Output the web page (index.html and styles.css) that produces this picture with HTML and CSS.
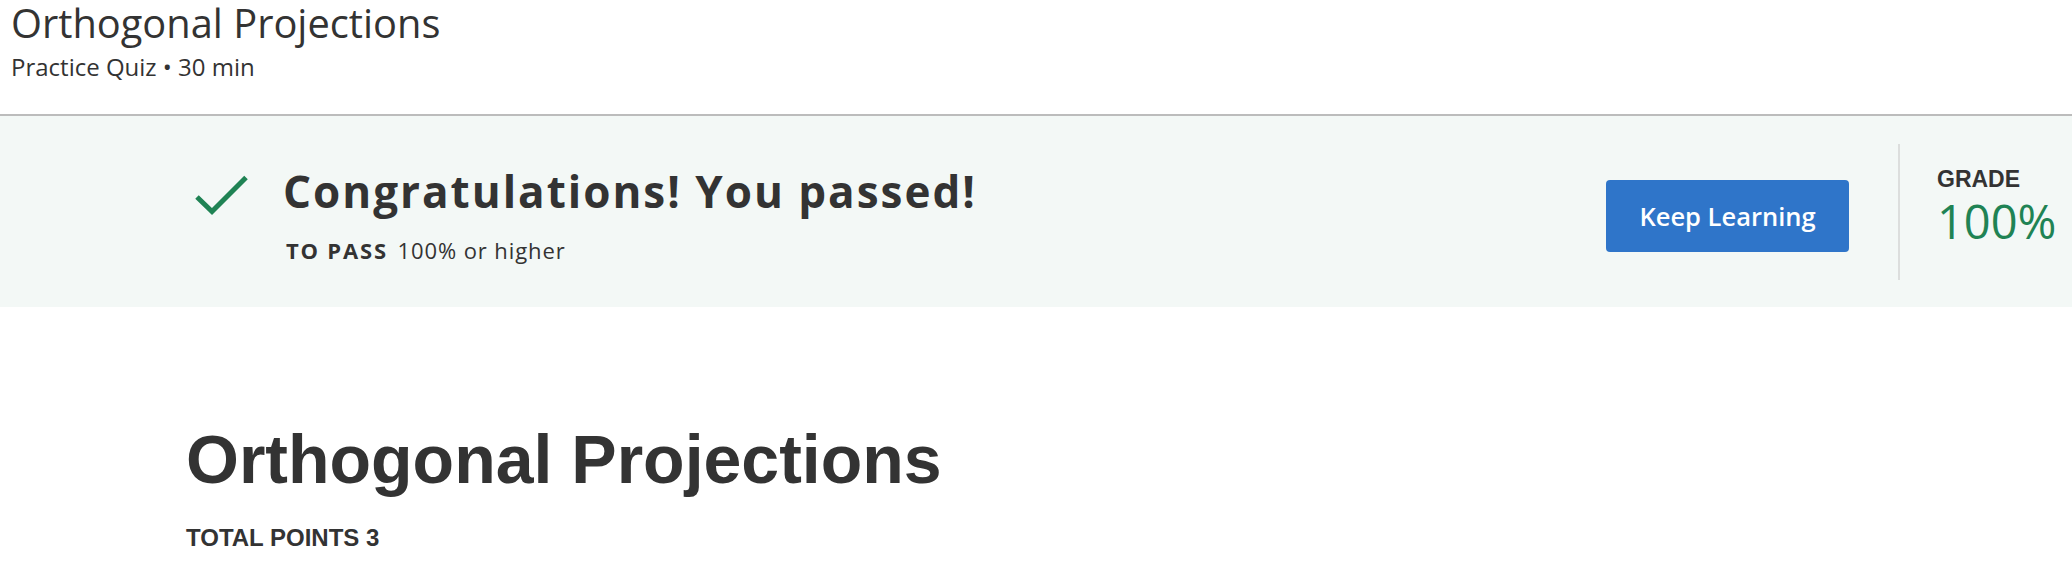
FILE: index.html
```html
<!DOCTYPE html>
<html lang="en">
<head>
<meta charset="utf-8">
<title>Orthogonal Projections</title>
<link rel="stylesheet" href="styles.css">
</head>
<body>
<header class="top">
  <h1 class="top-title">Orthogonal Projections</h1>
  <div class="top-meta">Practice Quiz • 30 min</div>
</header>
<section class="result">
  <svg class="check" width="56" height="46" viewBox="0 0 56 46" aria-hidden="true">
    <polyline points="4,25 19,39.5 53,5.5" fill="none" stroke="#1f8354" stroke-width="5" stroke-linecap="butt" stroke-linejoin="miter"/>
  </svg>
  <div class="result-text">
    <h2 class="result-heading">Congratulations! You passed!</h2>
    <div class="result-pass"><span class="pass-label">TO PASS</span> <span class="pass-value">100% or higher</span></div>
  </div>
  <button class="btn-primary">Keep Learning</button>
  <div class="divider"></div>
  <div class="grade">
    <div class="grade-label">GRADE</div>
    <div class="grade-value">100%</div>
  </div>
</section>
<main class="quiz">
  <h1 class="quiz-title">Orthogonal Projections</h1>
  <div class="quiz-points">TOTAL POINTS 3</div>
</main>
</body>
</html>
```
FILE: styles.css
```css
* { box-sizing: border-box; }
html, body { margin: 0; padding: 0; background: #fff; }
body { color: #333; font-family: "Open Sans", "Liberation Sans", sans-serif; overflow: hidden; }

.top {
  padding: 2px 0 31px 11px;
  border-bottom: 2px solid #bcbcbc;
}
.top-title {
  margin: 0;
  font-family: "Open Sans", sans-serif;
  font-weight: 400;
  font-size: 39.8px;
  line-height: 42px;
  color: #333;
}
.top-meta {
  margin-top: 7px;
  font-size: 24px;
  line-height: 32px;
  color: #333;
}

.result {
  display: flex;
  align-items: flex-start;
  height: 191px;
  padding-left: 193px;
  background: #f3f8f6;
}
.check { margin-top: 56px; flex: none; }
.result-text { flex: 1; margin-left: 34px; margin-top: 50px; }
.result-heading {
  margin: 0;
  font-family: "Open Sans", sans-serif;
  font-weight: 700;
  font-size: 44px;
  letter-spacing: 2px;
  line-height: 50px;
  color: #333;
}
.result-pass {
  margin-top: 20px;
  padding-left: 3px;
  font-size: 22px;
  line-height: 28px;
  white-space: nowrap;
}
.pass-label { font-weight: 700; letter-spacing: 1.8px; margin-right: 4px; }
.pass-value { font-weight: 400; letter-spacing: 0.9px; }

.btn-primary {
  margin-top: 64px;
  width: 243px;
  height: 72px;
  flex: none;
  display: flex;
  align-items: center;
  justify-content: center;
  border: none;
  border-radius: 4px;
  background: #2f75c9;
  color: #fff;
  font-family: "Open Sans", sans-serif;
  font-weight: 600;
  font-size: 25.5px;
  padding: 0;
}
.divider {
  margin: 28px 37px 0 49px;
  width: 2px;
  height: 136px;
  background: #dcdedd;
  flex: none;
}
.grade { width: 135px; flex: none; margin-top: 51px; }
.grade-label {
  font-family: "Liberation Sans", Arial, sans-serif;
  font-weight: 700;
  font-size: 23px;
  line-height: 24px;
  color: #333;
}
.grade-value {
  margin-top: 4px;
  font-family: "Open Sans", sans-serif;
  font-size: 47px;
  line-height: 52px;
  color: #1f8354;
}

.quiz { padding: 111px 0 0 186px; }
.quiz-title {
  margin: 0;
  font-family: "Liberation Sans", Arial, sans-serif;
  font-weight: 700;
  font-size: 68px;
  line-height: 82px;
  color: #333;
}
.quiz-points {
  margin-top: 24px;
  font-family: "Liberation Sans", Arial, sans-serif;
  font-weight: 700;
  font-size: 24px;
  line-height: 28px;
  color: #333;
}
```
